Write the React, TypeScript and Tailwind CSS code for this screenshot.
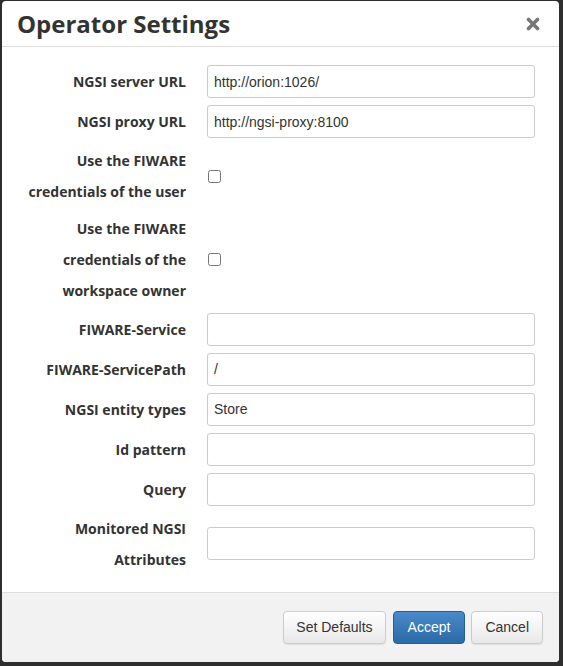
import React, { useState } from 'react';

interface Field {
    label: string[];
    kind: 'text' | 'checkbox';
    value?: string;
}

const FIELDS: Field[] = [
    { label: ['NGSI server URL'], kind: 'text', value: 'http://orion:1026/' },
    { label: ['NGSI proxy URL'], kind: 'text', value: 'http://ngsi-proxy:8100' },
    { label: ['Use the FIWARE', 'credentials of the user'], kind: 'checkbox' },
    { label: ['Use the FIWARE', 'credentials of the', 'workspace owner'], kind: 'checkbox' },
    { label: ['FIWARE-Service'], kind: 'text', value: '' },
    { label: ['FIWARE-ServicePath'], kind: 'text', value: '/' },
    { label: ['NGSI entity types'], kind: 'text', value: 'Store' },
    { label: ['Id pattern'], kind: 'text', value: '' },
    { label: ['Query'], kind: 'text', value: '' },
    { label: ['Monitored NGSI', 'Attributes'], kind: 'text', value: '' },
];

const FieldRow = ({ field }: { field: Field }) => {
    const [value, setValue] = useState(field.value ?? '');
    const isCheckbox = field.kind === 'checkbox';
    return (
        <div className={isCheckbox ? 'flex items-center mb-[-0.75px]' : 'flex items-center'}>
            <label className="w-[170px] shrink-0 text-right text-[14px] font-bold leading-[31px] text-[#333] font-['Open_Sans',sans-serif]">
                {field.label.map((line) => (
                    <div key={line}>{line}</div>
                ))}
            </label>
            <div className="ml-[21px] flex-1">
                {isCheckbox ? (
                    <input type="checkbox" className="ml-[1px] block h-[13px] w-[13px] accent-[#3a7bbf]" />
                ) : (
                    <input
                        className="block h-[33px] w-[328px] rounded-[3px] border border-[#ccc] bg-white px-[6px] text-[14px] text-[#333] font-['Liberation_Sans',Arial,sans-serif] outline-none"
                        value={value}
                        onChange={(e) => setValue(e.target.value)}
                    />
                )}
            </div>
        </div>
    );
};

export default function App() {
    return (
        <div className="min-h-[666px] w-full bg-[#2e2e2e] pt-[1px] pl-[2px]">
            <div className="w-[557px] overflow-hidden rounded-[4px] bg-white">
                {/* header */}
                <div className="flex h-[46px] items-center justify-between border-b border-[#ddd] pl-[15px] pr-[19px]">
                    <h1 className="text-[24px] font-bold leading-none text-[#333] font-['Open_Sans',sans-serif]">
                        Operator Settings
                    </h1>
                    <button type="button" className="text-[#777]">
                        <svg width="14" height="14" viewBox="0 0 14 14">
                            <path d="M2.5 2.5 L11.5 11.5 M11.5 2.5 L2.5 11.5" stroke="currentColor" strokeWidth="3.6" strokeLinecap="round" />
                        </svg>
                    </button>
                </div>

                {/* body */}
                <div className="flex flex-col gap-[7px] pt-[18px] pb-[17px] pl-[14px]">
                    {FIELDS.map((f) => (
                        <FieldRow key={f.label.join(' ')} field={f} />
                    ))}
                </div>

                {/* footer */}
                <div className="flex h-[70px] items-center justify-end gap-[6px] border-t border-[#ddd] bg-[#f2f2f2] pr-[16px] pt-[1px] font-['Liberation_Sans',Arial,sans-serif] text-[14px]">
                    <button
                        type="button"
                        className="h-[33px] rounded-[4px] border border-[#ccc] bg-gradient-to-b from-white to-[#e8e8e8] px-[12px] text-[#333] shadow-[0_1px_1px_rgba(0,0,0,0.08)]"
                    >
                        Set Defaults
                    </button>
                    <button
                        type="button"
                        className="ml-[1px] h-[33px] rounded-[4px] border border-[#285e8e] bg-gradient-to-b from-[#4a8acb] to-[#2a6aa6] px-[14px] text-white"
                    >
                        Accept
                    </button>
                    <button
                        type="button"
                        className="h-[33px] rounded-[4px] border border-[#ccc] bg-gradient-to-b from-white to-[#e8e8e8] px-[13px] text-[#333] shadow-[0_1px_1px_rgba(0,0,0,0.08)]"
                    >
                        Cancel
                    </button>
                </div>
            </div>
        </div>
    );
}
